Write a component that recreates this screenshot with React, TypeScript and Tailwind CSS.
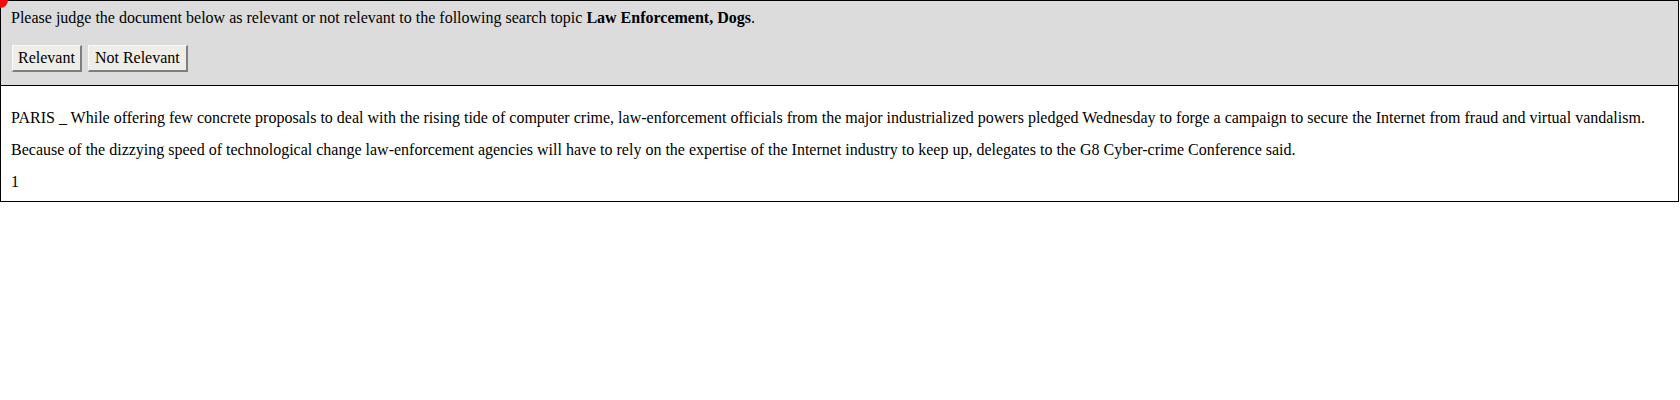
export default function App() {
  return (
    <div className="relative w-[1679px] bg-white font-['Liberation_Serif',serif] text-[16px] leading-[18px] text-black">
      {/* red marker dot in the corner */}
      <div className="absolute -left-[8px] -top-[8px] h-[16px] w-[16px] rounded-full bg-[#f20d0d]" />

      <div className="border border-black">
        {/* Prompt + judge buttons */}
        <div className="border-b border-black bg-[#dcdcdc] px-[10px] pt-[8px] pb-[13px]">
          <div>
            Please judge the document below as relevant or not relevant to the following search topic{" "}
            <b>Law Enforcement, Dogs</b>.
          </div>
          <div className="mt-[18px] flex gap-[6px] pl-[1px]">
            <button className="h-[27px] border border-t-[#fafafa] border-l-[#fafafa] border-r-[#7e7e7e] border-b-[#7e7e7e] border-r-2 border-b-2 bg-[#efede8] px-[5px] leading-[18px]">
              Relevant
            </button>
            <button className="h-[27px] border border-t-[#fafafa] border-l-[#fafafa] border-r-[#7e7e7e] border-b-[#7e7e7e] border-r-2 border-b-2 bg-[#efede8] px-[6px] leading-[18px]">
              Not Relevant
            </button>
          </div>
        </div>

        {/* Document text */}
        <div className="flex flex-col gap-[14px] px-[10px] pt-[23px] pb-[10px]">
          <p>
            PARIS _ While offering few concrete proposals to deal with the rising tide of computer crime, law-enforcement officials from the major industrialized powers pledged Wednesday to forge a campaign to secure the Internet from fraud and virtual vandalism.
          </p>
          <p>
            Because of the dizzying speed of technological change law-enforcement agencies will have to rely on the expertise of the Internet industry to keep up, delegates to the G8 Cyber-crime Conference said.
          </p>
          <p>1</p>
        </div>
      </div>
    </div>
  );
}
